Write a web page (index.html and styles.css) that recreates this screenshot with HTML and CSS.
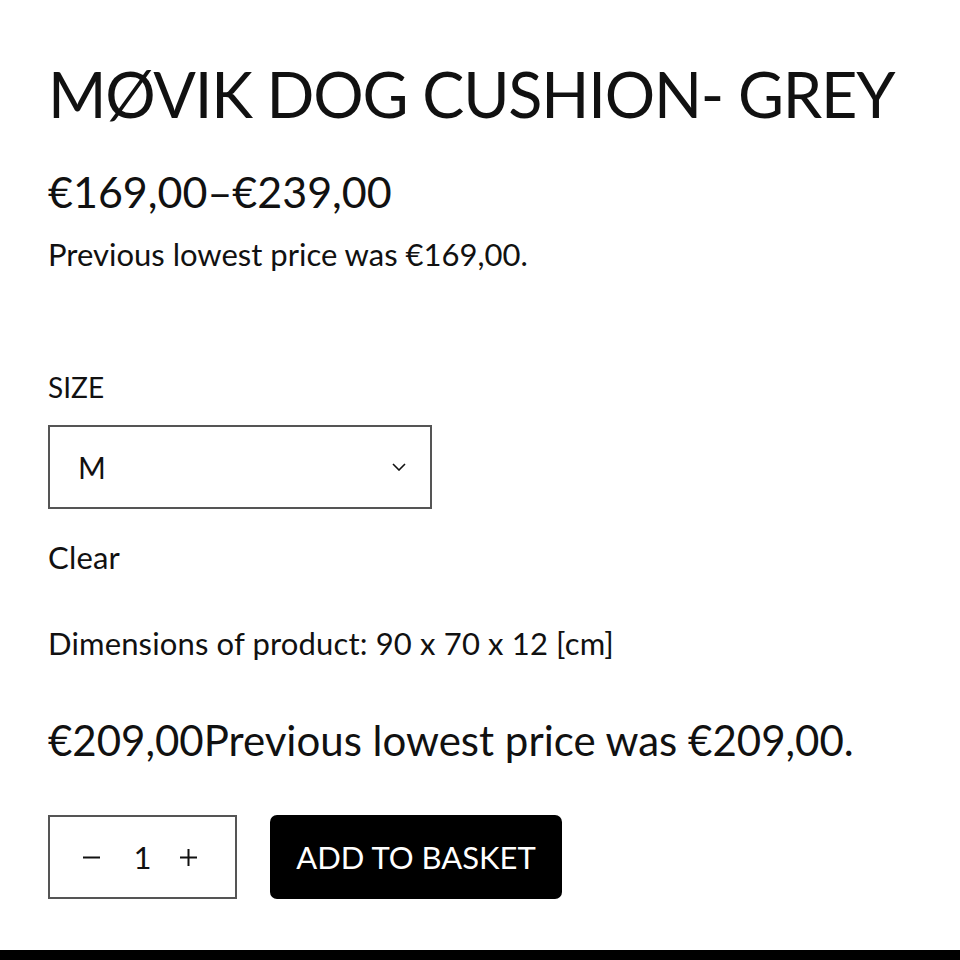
FILE: index.html
```html
<!DOCTYPE html>
<html lang="en">
<head>
<meta charset="utf-8">
<link rel="stylesheet" href="styles.css">
</head>
<body>
<main class="product">
  <h1 class="title">MØVIK DOG CUSHION- GREY</h1>
  <p class="price-range">€169,00–€239,00</p>
  <p class="lowest">Previous lowest price was €169,00.</p>
  <div class="variation">
    <label class="label">SIZE</label>
    <div class="select">
      <span class="select-value">M</span>
      <svg class="chevron" width="14" height="8" viewBox="0 0 14 8"><path d="M1 1 L7 7 L13 1" fill="none" stroke="#111" stroke-width="1.6"/></svg>
    </div>
    <a class="clear">Clear</a>
  </div>
  <p class="dimensions">Dimensions of product: 90 x 70 x 12 [cm]</p>
  <p class="variant-price">€209,00Previous lowest price was €209,00.</p>
  <div class="cart">
    <div class="qty">
      <svg class="qty-btn" width="17" height="17" viewBox="0 0 17 17"><path d="M0 8.5 H17" stroke="#111" stroke-width="2"/></svg>
      <span class="qty-val">1</span>
      <svg class="qty-btn" width="17" height="17" viewBox="0 0 17 17"><path d="M0 8.5 H17 M8.5 0 V17" stroke="#111" stroke-width="2"/></svg>
    </div>
    <button class="add">ADD TO BASKET</button>
  </div>
</main>
<div class="footer-bar"></div>
</body>
</html>
```
FILE: styles.css
```css
html, body {
  margin: 0;
  padding: 0;
  background: #fff;
}
body {
  font-family: "Lato", "Noto Sans", sans-serif;
  color: #111;
  width: 960px;
  height: 960px;
  overflow: hidden;
  position: relative;
}
.product {
  padding: 0 48px;
}
.title {
  margin: 0;
  padding-top: 56px;
  font-size: 63px;
  font-weight: 400;
  line-height: 76px;
  letter-spacing: -1.2px;
  white-space: nowrap;
}
.price-range {
  margin: 0;
  padding-top: 34px;
  font-size: 43px;
  line-height: 52px;
}
.lowest {
  margin: 0;
  padding-top: 16px;
  font-size: 31px;
  line-height: 40px;
}
.variation {
  padding-top: 93px;
}
.label {
  display: block;
  font-size: 28px;
  line-height: 40px;
}
.select {
  margin-top: 18px;
  width: 384px;
  height: 84px;
  box-sizing: border-box;
  border: 2px solid #555;
  display: flex;
  align-items: center;
  justify-content: space-between;
  padding: 0 24px 0 28px;
}
.select-value {
  font-size: 30px;
}
.clear {
  display: block;
  margin-top: 28px;
  font-size: 31px;
  letter-spacing: 0.2px;
  line-height: 40px;
}
.dimensions {
  margin: 0;
  padding-top: 46px;
  font-size: 31px;
  letter-spacing: 0.15px;
  line-height: 40px;
}
.variant-price {
  margin: 0;
  padding-top: 51px;
  font-size: 42px;
  line-height: 52px;
}
.cart {
  display: flex;
  gap: 33px;
  margin-top: 49px;
}
.qty {
  width: 189px;
  height: 84px;
  box-sizing: border-box;
  border: 2px solid #555;
  display: grid;
  grid-template-columns: 33px 69px 23px;
  justify-items: center;
  align-items: center;
  padding-left: 25px;
  font-size: 31px;
}
.qty-btn {
  display: block;
}
.add {
  height: 84px;
  width: 292px;
  border: 0;
  border-radius: 7px;
  background: #000;
  color: #fff;
  font-family: inherit;
  font-size: 31px;
  padding: 0;
}
.footer-bar {
  position: absolute;
  left: 0;
  right: 0;
  bottom: 0;
  height: 10px;
  background: #000;
}
```
